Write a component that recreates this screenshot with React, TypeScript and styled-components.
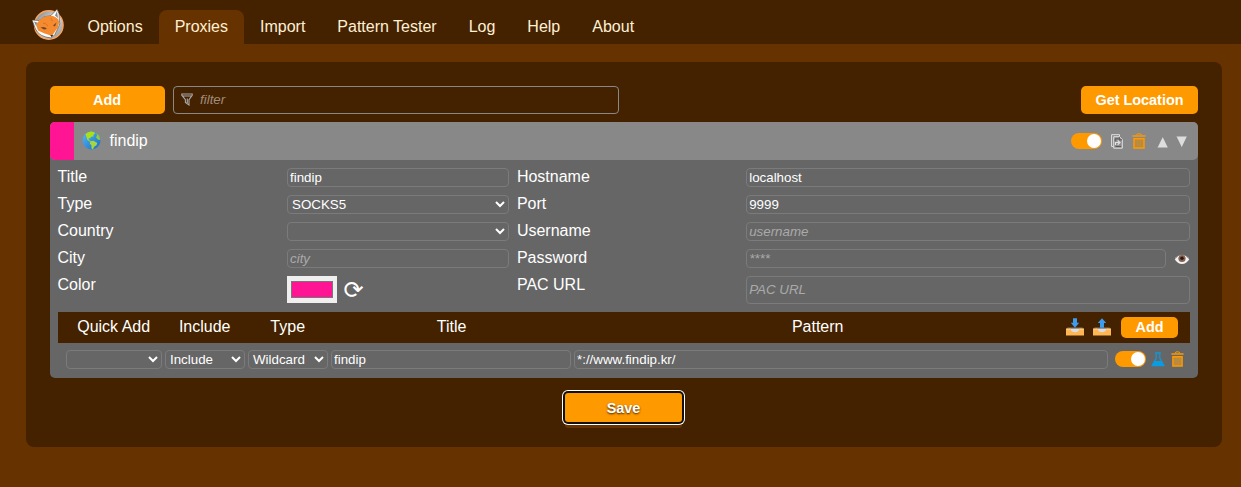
import React from 'react';
import styled, { createGlobalStyle, css } from 'styled-components';

const Global = createGlobalStyle`
  * { box-sizing: border-box; }
  body { margin: 0; background: #630; color: #fff; font: 16px/20px "Liberation Sans", Arial, sans-serif; }
  svg { display: block; flex: none; }
`;

const Nav = styled.nav`
  height: 44px;
  background: #420;
  display: flex;
  align-items: flex-end;
  padding-left: 31px;
`;
const LogoBox = styled.div`
  height: 44px;
  width: 40.5px;
  padding-top: 8px;
`;
const Tab = styled.a<{ $active?: boolean }>`
  height: 34px;
  padding: 7px 16px 0;
  color: #ffefd5;
  border-radius: 8px 8px 0 0;
  background: ${(p) => (p.$active ? '#630' : 'transparent')};
`;
const Panel = styled.main`
  margin: 18px 19px 0 26px;
  height: 385px;
  padding: 24px;
  border-radius: 8px;
  background: #420;
`;
const Toolbar = styled.div`
  display: flex;
  gap: 8px;
  height: 28px;
  margin-bottom: 8px;
`;
const Button = styled.button<{ $width: number; $small?: boolean; $nudge?: number }>`
  width: ${(p) => p.$width}px;
  height: ${(p) => (p.$small ? 21 : 28)}px;
  padding: 0 ${(p) => p.$nudge ?? 0}px 0 0;
  border: 0;
  border-radius: 5px;
  background: #f90;
  color: #fff;
  font: bold 14.4px "Liberation Sans", Arial, sans-serif;
`;
const Filter = styled.label`
  width: 446px;
  border: 1px solid #888;
  border-radius: 4px;
  display: flex;
  align-items: center;
  padding: 0 0 1px 7px;
  gap: 5px;
`;
const field = css`
  width: 100%;
  min-width: 0;
  height: 19px;
  margin: 0;
  background: transparent;
  border: 1px solid #7b7b7b;
  border-radius: 4px;
  color: #fff;
  font: 13.333px "Liberation Sans", Arial, sans-serif;
  outline: 0;
`;
const Input = styled.input<{ $bare?: boolean; $tall?: boolean }>`
  ${field}
  padding: 0 2px;
  ${(p) => p.$tall && 'height: 28px; padding-bottom: 2px;'}
  ${(p) => p.$bare && 'border: 0;'}
  &::placeholder { color: ${(p) => (p.$bare ? '#a08c7b' : '#aaa')}; font-style: italic; opacity: 1; }
`;
const Select = styled.select`
  ${field}
  padding: 0;
`;
const Spacer = styled.div`
  flex: 1;
`;
const Card = styled.section`
  height: 256px;
  border-radius: 5px;
  overflow: hidden;
  background: #666;
`;
const CardHeader = styled.header`
  height: 38px;
  background: #888;
  border-radius: 0 0 5px 5px;
  overflow: hidden;
  display: flex;
  align-items: center;
  padding-right: 10px;
`;
const Swatch = styled.i`
  width: 24px;
  height: 38px;
  margin-right: 8px;
  background: #ff1493;
`;
const CardTitle = styled.span`
  margin-left: 8.5px;
  flex: 1;
`;
const Toggle = styled.span`
  width: 31px;
  height: 16px;
  padding: 1px;
  border-radius: 8px;
  background: #f90;
  display: flex;
  justify-content: flex-end;
  flex: none;
  &::after { content: ''; width: 14px; height: 14px; border-radius: 50%; background: #fff; }
`;
const HeaderTools = styled.div`
  display: flex;
  align-items: center;
`;
const Gap = styled.i<{ $w: number }>`
  width: ${(p) => p.$w}px;
  flex: none;
`;
const Form = styled.div`
  display: grid;
  grid-template-columns: 221.5px 221.9px 221.3px 1fr;
  grid-template-rows: repeat(4, 19px) 28px;
  gap: 8px;
  padding: 8px 8px 0 7.5px;
`;
const Label = styled.label`
  line-height: 18px;
`;
const Line = styled.div`
  display: flex;
  align-items: center;
  gap: 8px;
`;
const ColorWell = styled.span`
  width: 50px;
  height: 27px;
  border: 4px solid #efefef;
  background: #efefef;
  display: flex;
  align-self: flex-start;
  padding: 1px 0 1px;
  &::after { content: ''; flex: 1; background: #ff1493; border: 1px solid #777; }
`;
const Refresh = styled.span`
  margin-left: -1.5px;
  height: 28px;
  font: 24px/29px "DejaVu Sans", sans-serif;
`;
const columns = css`
  display: grid;
  grid-template-columns: 96px 80px 80px 240px 534px 1fr;
  column-gap: 3px;
  align-items: center;
`;
const PatternHead = styled.div`
  ${columns}
  height: 31px;
  margin: 8px 8px 0;
  padding: 0 12px 2px 7.7px;
  background: #420;
  text-align: center;
`;
const WideHead = styled.span<{ $left?: number; $right?: number }>`
  padding: 0 ${(p) => p.$right ?? 0}px 0 ${(p) => p.$left ?? 0}px;
`;
const HeadTools = styled.div`
  display: flex;
  align-items: center;
  justify-content: flex-end;
  margin-left: -50px;
  padding-top: 1px;
`;
const PatternRow = styled.div`
  ${columns}
  margin: 7px 8px 0;
  padding: 0 4px 0 8px;
`;
const RowTools = styled.div`
  display: flex;
  align-items: center;
  height: 18px;
  margin-bottom: 1px;
  padding-left: 4px;
`;
const Save = styled.button`
  display: block;
  width: 117px;
  height: 29px;
  margin: 15px auto 0;
  position: relative;
  left: -0.5px;
  border: 0;
  border-radius: 3px;
  background: #f90;
  color: #fff;
  font: bold 14.4px "Liberation Sans", Arial, sans-serif;
  text-shadow: 0 1px 2px #420;
  box-shadow: 0 0 0 2px #101010, 0 0 0 3px #fff, 0 6px 0 0 #630;
`;

const Fox = () => (
  <svg width="34" height="33" viewBox="0 0 34 33">
    <defs>
      <linearGradient id="ring" x2="1" y2="1">
        <stop stopColor="#777" /><stop offset=".5" stopColor="#ddd" /><stop offset="1" stopColor="#888" />
      </linearGradient>
    </defs>
    <circle cx="17.8" cy="17" r="14.3" fill="url(#ring)" stroke="#f7a562" strokeWidth="1.4" />
    <path d="M1 12L8 12.5Q12 8 20 7.5L26 1.3Q29 5 28.3 12Q30 16 27 20Q24 28 20.5 30Q8 29 4.5 21Z" fill="#fff" stroke="#4a3a30" strokeWidth=".6" />
    <path d="M6 15Q13 6 22 8Q28 10 28 14Q28 19 25 22L21 28Q12 25 7 22.5Q5 19 6 15Z" fill="#f58a2e" />
    <path d="M3 13.5L6 14.5L5.5 19ZM24 7.5L26 3L27 10Z" fill="#888" />
    <path d="M9.5 19.5Q14 18 16 21L13 21.5ZM22 17.5L25.5 14.5L24 18.5Z" fill="#6b4a32" />
    <path d="M12 15Q15 15 17 18M20 10Q20 13 22 13" fill="none" stroke="#d56d20" strokeWidth=".8" />
    <path d="M19.3 27L22.2 27L20.8 29.6Z" fill="#333" />
  </svg>
);
const Funnel = () => (
  <svg width="12" height="13" viewBox="0 0 12 13" fill="none" stroke="#aaa" strokeWidth="1.1">
    <path d="M.8 1H11.2V2.2L8 6.6V12L4.4 9.5V6.6L.8 2.2ZM1.2 3H10.8M6.3 5.5V10" />
  </svg>
);
const Globe = () => (
  <svg width="19" height="20" viewBox="0 0 19 20">
    <defs><linearGradient id="sea" x2="1" y2="1"><stop stopColor="#55b9f5" /><stop offset="1" stopColor="#1769c5" /></linearGradient></defs>
    <circle cx="9.5" cy="9.5" r="9" fill="url(#sea)" />
    <path d="M3.5 3Q6 .8 9 .6L12.5 1.2L12.8 3L11 4L12 5.3L9.3 5.8L7.7 7.5L6.4 7.2L7 9L9 10.5L8.2 11L5.3 8.8L4.5 6Z" fill="#a9e019" />
    <path d="M8.5 10.3L11.5 9.7L15.3 12L14.3 14.4L12.3 15.4L11 18.2L9.5 17.5L9.5 14.5L7.8 12.6Z" fill="#a5d63c" />
    <path d="M14.3 2L17.3 5L18.3 9L16.2 8.7L14 6.5L15 4.2Z" fill="#8fcb3a" />
  </svg>
);
const CopyIcon = () => (
  <svg width="12" height="15" viewBox="0 0 12 15" fill="none" stroke="#e0e0e0">
    <path d="M2.5 12.5H.6V.7H8.5V2.5" />
    <path d="M2.7 2.7H8.5L11.3 5.5V14.2H2.7Z" fill="#8d8d8d" />
    <path d="M4.2 7.3V4.8H7.5M8.3 3V5.8H11M4.5 12.5H10" stroke="#555" strokeWidth=".9" />
    <path d="M4.5 11V8.5H8M6.6 6.5L9 8.5L6.6 10.7" strokeWidth="1.2" />
  </svg>
);
const Trash = ({ size = 14 }: { size?: number }) => (
  <svg width={size} height="16" viewBox="0 0 14 16" preserveAspectRatio="none" fill="none" stroke="#f90">
    <path d="M4.5 2.3L5.3 .9H8.7L9.5 2.3" />
    <path d="M.5 3H13.5" strokeWidth="1.7" />
    <path d="M2 5.8H12V15.1H2Z" fill="#b88b40" strokeWidth="1.5" />
    <path d="M5.5 7V13.5M8.5 7V13.5" stroke="#c48d35" strokeWidth=".6" />
  </svg>
);
const Triangle = ({ down }: { down?: boolean }) => (
  <svg width="11" height="13" viewBox="0 0 11 13">
    <path d={down ? 'M.2 1.5H10.8L5.5 12.5Z' : 'M.2 12.5H10.8L5.5 1.8Z'} fill="#ddd" />
    <path d={down ? 'M.2 1.5L5.5 12.5' : 'M.2 12.5L5.5 1.8'} stroke="#777" strokeWidth=".6" />
  </svg>
);
const Eye = () => (
  <svg width="16" height="12" viewBox="0 0 16 12">
    <path d="M.8 6.2Q3 2 8 2T15.2 6.2Q12.5 11 8 11T.8 6.2Z" fill="#f2f2f2" />
    <path d="M1.2 5.6Q4 1.4 8 1.4T14.8 5.6" fill="none" stroke="#77716d" strokeWidth=".8" />
    <circle cx="8" cy="5.5" r="3.6" fill="#89604f" /><circle cx="8" cy="5.3" r="1.7" fill="#241a18" />
  </svg>
);
const Tray = ({ up }: { up?: boolean }) => (
  <svg width="18" height="18" viewBox="0 0 18 18">
    <path d="M1.5 9H16.5L17.5 12H.5Z" fill="#654a33" />
    <path d="M3.5 10.5H14.5V15H3.5Z" fill="#ddd" />
    <path d="M0 10.5H4.4Q5.2 14.3 9 14.3T13.6 10.5H18V17.5H0Z" fill="#ffb653" />
    <path d="M.4 11.2H4M14 11.2H17.6" stroke="#ffd699" />
    <path d={up ? 'M9 .2L13.2 5H11V9.7H7V5H4.8Z' : 'M7 .2H11V4.8H13.2L9 9.7L4.8 4.8H7Z'} fill="#3c9df0" />
  </svg>
);
const Flask = () => (
  <svg width="14" height="15" viewBox="0 0 14 15">
    <path d="M4 .9H10M5.2 1V6.2L1.2 13.5H12.8L8.8 6.2V1" fill="none" stroke="#0a9be0" strokeWidth="1.2" />
    <path d="M3.6 9H10.4L13.4 14.2H.6Z" fill="#0a9be0" />
  </svg>
);

const tabs = ['Options', 'Proxies', 'Import', 'Pattern Tester', 'Log', 'Help', 'About'];

export default function App() {
  return (
    <>
      <Global />
      <Nav>
        <LogoBox><Fox /></LogoBox>
        {tabs.map((t) => <Tab key={t} $active={t === 'Proxies'}>{t}</Tab>)}
      </Nav>
      <Panel>
        <Toolbar>
          <Button $width={115} $nudge={1}>Add</Button>
          <Filter><Funnel /><Input $bare placeholder="filter" /></Filter>
          <Spacer />
          <Button $width={117}>Get Location</Button>
        </Toolbar>
        <Card>
          <CardHeader>
            <Swatch /><Globe /><CardTitle>findip</CardTitle>
            <HeaderTools>
              <Toggle /><Gap $w={9} /><CopyIcon /><Gap $w={9} /><Trash /><Gap $w={11} />
              <Triangle /><Gap $w={8} /><Triangle down /><Gap $w={1} />
            </HeaderTools>
          </CardHeader>
          <Form>
            <Label>Title</Label><Input defaultValue="findip" />
            <Label>Hostname</Label><Input defaultValue="localhost" />
            <Label>Type</Label><Select><option>SOCKS5</option></Select>
            <Label>Port</Label><Input defaultValue="9999" />
            <Label>Country</Label><Select><option></option></Select>
            <Label>Username</Label><Input placeholder="username" />
            <Label>City</Label><Input placeholder="city" />
            <Label>Password</Label><Line><Input placeholder="****" /><Eye /></Line>
            <Label>Color</Label><Line><ColorWell /><Refresh>⟳</Refresh></Line>
            <Label>PAC URL</Label><Input $tall placeholder="PAC URL" />
          </Form>
          <PatternHead>
            <span>Quick Add</span><span>Include</span><span>Type</span>
            <WideHead $left={2}>Title</WideHead>
            <WideHead $right={46}>Pattern</WideHead>
            <HeadTools><Tray /><Gap $w={9} /><Tray up /><Gap $w={10} /><Button $width={57} $small>Add</Button></HeadTools>
          </PatternHead>
          <PatternRow>
            <Select><option></option></Select>
            <Select><option>Include</option></Select>
            <Select><option>Wildcard</option></Select>
            <Input defaultValue="findip" />
            <Input defaultValue="*://www.findip.kr/" />
            <RowTools><Toggle /><Gap $w={5} /><Flask /><Gap $w={6} /><Trash size={13} /></RowTools>
          </PatternRow>
        </Card>
        <Save>Save</Save>
      </Panel>
    </>
  );
}
